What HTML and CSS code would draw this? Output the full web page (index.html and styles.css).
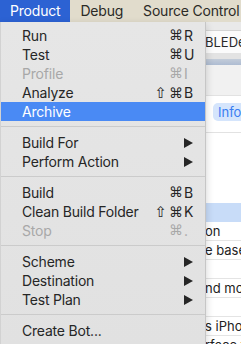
FILE: index.html
```html
<!DOCTYPE html>
<html lang="en">
<head>
    <meta charset="UTF-8">
    <meta name="viewport" content="width=device-width, initial-scale=1.0">
    <title>Product menu</title>
    <link rel="stylesheet" href="styles.css">
</head>
<body>
    <!-- menu bar -->
    <div class="menubar">
        <span class="mb-item active">Product</span>
        <span class="mb-item">Debug</span>
        <span class="mb-item">Source Control</span>
    </div>

    <!-- window behind the menu -->
    <div class="window">
        <div class="navigator"></div>
        <div class="editor">
            <div class="toolbar"><div class="field">BLEDemo</div></div>
            <div class="gap"></div>
            <div class="tabband"></div>
            <div class="subbar"></div>
            <div class="infobar"><span class="pill">Info</span></div>
            <div class="blank"></div>
            <div class="row selected"></div>
            <div class="row">on</div>
            <div class="row">e base m</div>
            <div class="row"></div>
            <div class="row">nd mod</div>
            <div class="row"></div>
            <div class="row">s iPhon</div>
            <div class="row">rface fi</div>
        </div>
    </div>

    <!-- dropdown -->
    <div class="menu">
        <div class="item"><span class="label">Run</span><span class="sc"><span class="mod">⌘</span><span class="key">R</span></span></div>
        <div class="item"><span class="label">Test</span><span class="sc"><span class="mod">⌘</span><span class="key">U</span></span></div>
        <div class="item disabled"><span class="label">Profile</span><span class="sc"><span class="mod">⌘</span><span class="key">I</span></span></div>
        <div class="item"><span class="label">Analyze</span><span class="sc"><span class="mod"><span class="shift">⇧</span>⌘</span><span class="key">B</span></span></div>
        <div class="item hover"><span class="label">Archive</span></div>
        <div class="sep"></div>
        <div class="item"><span class="label">Build For</span><svg class="arrow" width="9" height="10" viewBox="0 0 9 10"><polygon points="0,0 9,5 0,10"/></svg></div>
        <div class="item"><span class="label">Perform Action</span><svg class="arrow" width="9" height="10" viewBox="0 0 9 10"><polygon points="0,0 9,5 0,10"/></svg></div>
        <div class="sep"></div>
        <div class="item"><span class="label">Build</span><span class="sc"><span class="mod">⌘</span><span class="key">B</span></span></div>
        <div class="item"><span class="label">Clean Build Folder</span><span class="sc"><span class="mod"><span class="shift">⇧</span>⌘</span><span class="key">K</span></span></div>
        <div class="item disabled"><span class="label">Stop</span><span class="sc"><span class="mod">⌘</span><span class="key">.</span></span></div>
        <div class="sep"></div>
        <div class="item"><span class="label">Scheme</span><svg class="arrow" width="9" height="10" viewBox="0 0 9 10"><polygon points="0,0 9,5 0,10"/></svg></div>
        <div class="item"><span class="label">Destination</span><svg class="arrow" width="9" height="10" viewBox="0 0 9 10"><polygon points="0,0 9,5 0,10"/></svg></div>
        <div class="item"><span class="label">Test Plan</span><svg class="arrow" width="9" height="10" viewBox="0 0 9 10"><polygon points="0,0 9,5 0,10"/></svg></div>
        <div class="sep"></div>
        <div class="item"><span class="label">Create Bot...</span></div>
    </div>
</body>
</html>
```

FILE: styles.css
```css
*{
    margin: 0;
    padding: 0;
    box-sizing: border-box;
}
body{
    width: 241px;
    height: 344px;
    overflow: hidden;
    position: relative;
    font-family: Inter, "DejaVu Sans", sans-serif;
    font-size: 14px;
    letter-spacing: -0.2px;
    color: #262626;
    background-color: #ffffff;
}

/* 菜单栏 */
.menubar{
    display: flex;
    height: 22px;
    line-height: 22px;
    background-color: #e1dccc;
    white-space: nowrap;
    overflow: hidden;
}
.mb-item{
    padding: 0 10px;
    color: #2b2a26;
}
.mb-item.active{
    background-color: #2c62d3;
    color: #ffffff;
}

/* 后面的窗口 */
.window{
    display: flex;
    height: 322px;
}
.navigator{
    width: 205px;
    background-color: #f2f2f2;
}
.editor{
    flex: 1;
    overflow: hidden;
    font-size: 13px;
    letter-spacing: 0;
    white-space: nowrap;
}
.toolbar{
    height: 31px;
    padding-top: 8px;
    background-color: #e9e9e9;
}
.field{
    height: 23px;
    line-height: 22px;
    background-color: #fbfbfb;
    border-top: 1px solid #d4d4d4;
    color: #2a2a2a;
    overflow: hidden;
}
.gap{
    height: 6px;
    background-color: #e3e3e3;
}
.tabband{
    height: 6px;
    background: linear-gradient(#c3ccd9, #aebcd2);
}
.subbar{
    height: 31px;
    background-color: #f1f1f1;
    border-bottom: 1px solid #e2e2e2;
}
.infobar{
    height: 37px;
    padding-top: 7px;
    padding-left: 8px;
    border-bottom: 1px solid #e2e2e2;
    overflow: hidden;
}
.pill{
    display: inline-block;
    height: 18px;
    line-height: 18px;
    padding: 0 6px 0 5px;
    background-color: #d5e5fc;
    color: #3a7df2;
    border-radius: 5px 0 0 5px;
}
.blank{
    height: 70px;
}
.row{
    height: 19px;
    line-height: 18px;
    border-bottom: 1px solid #e4e4e4;
    color: #222222;
    overflow: hidden;
}
.row.selected{
    background-color: #c8dcf8;
    border-bottom: none;
}

/* 下拉菜单 盖在窗口上 */
.menu{
    position: absolute;
    top: 22px;
    left: 0;
    width: 206px;
    padding: 4px 0;
    background: linear-gradient(#e6e6e6, #e1e1e1);
    border-right: 1px solid #c6c6c6;
    border-left: 1px solid #d2d2d2;
    box-shadow: 0 3px 8px rgba(0, 0, 0, 0.18);
}
.item{
    display: flex;
    align-items: center;
    height: 19px;
    padding: 0 10px 0 21px;
    white-space: nowrap;
}
.item.hover{
    background-color: #4a8af4;
    color: #ffffff;
}
.item.disabled{
    color: #a8a8a8;
}
.sc{
    margin-left: auto;
    display: flex;
}
.mod{
    text-align: right;
    font-family: "DejaVu Sans", sans-serif;
    font-size: 14px;
    letter-spacing: 0;
}
.shift{
    font-size: 15px;
    margin-right: 2px;
}
.key{
    width: 12px;
    padding-left: 1px;
}
.arrow{
    margin-left: auto;
    margin-right: 2px;
    fill: #262626;
}
.sep{
    height: 12px;
    padding-top: 5px;
}
.sep::after{
    content: "";
    display: block;
    height: 1px;
    background-color: #cbcbcb;
}
```
